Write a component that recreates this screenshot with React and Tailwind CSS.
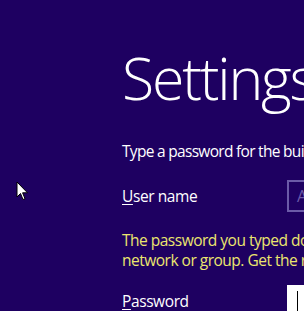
import React from 'react';

const Row = ({ label, rest, children }) => (
  <div className="flex items-center">
    <div className="w-[165px] shrink-0 text-[15.5px] tracking-[-0.4px] leading-[24px] text-white">
      <span className="underline underline-offset-2">{label}</span>
      {rest}
    </div>
    {children}
  </div>
);

const App = () => {
  return (
    <div
      className="relative w-[304px] h-[311px] overflow-hidden bg-[#1e0061] text-white"
      style={{ fontFamily: '"Open Sans", "Noto Sans", sans-serif' }}
    >
      <div className="pl-[122px] pt-[48px] whitespace-nowrap">
        <h1 className="text-[59px] font-light leading-none tracking-[-2.2px]">Settings</h1>

        <p className="mt-[37px] text-[15.5px] tracking-[-0.7px] leading-none">
          Type a password for the built-in Administrator account
        </p>

        <div className="mt-[20px]">
          <Row label="U" rest="ser name">
            <div className="w-[220px] h-[32px] border-2 border-[#6b5aa8] flex items-center pl-[8px] text-[16px] text-[#6b5aa8]">
              Administrator
            </div>
          </Row>
        </div>

        <div className="mt-[18px] text-[15.5px] tracking-[-0.5px] leading-[20px] text-[#ece66e]">
          <p>The password you typed doesn't meet the requirements of your</p>
          <p>network or group. Get the requirements from your administrator.</p>
        </div>

        <div className="mt-[15px]">
          <Row label="P" rest="assword">
            <div className="w-[220px] h-[32px] bg-white flex items-start pl-[10px] pt-[6px]">
              <div className="w-[1px] h-[20px] bg-black" />
            </div>
          </Row>
        </div>
      </div>

      <svg className="absolute left-[16px] top-[181px]" width="13" height="20" viewBox="0 0 13 20">
        <path d="M1 1 L1 16 L4.5 12.5 L7 18.5 L9 17.7 L6.6 11.8 L11.5 11.8 Z" fill="white" stroke="black" strokeWidth="1" />
      </svg>
    </div>
  );
};

export default App;
